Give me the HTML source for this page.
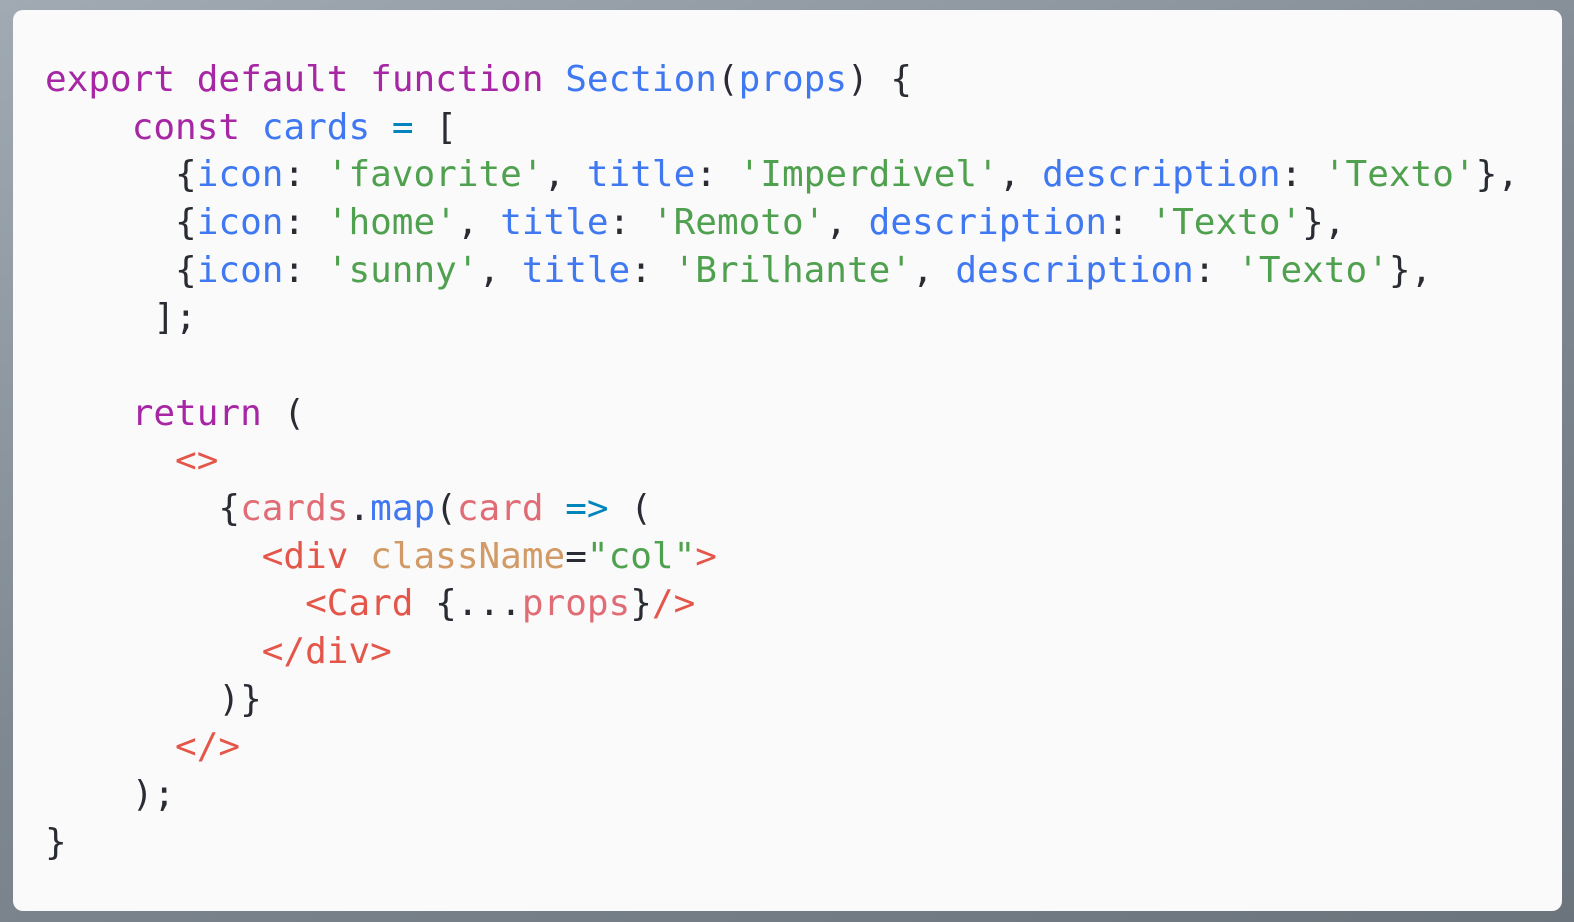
<!DOCTYPE html>
<html><head><meta charset="utf-8"><style>
html,body{margin:0;padding:0;}
body{width:1574px;height:922px;background:linear-gradient(160deg,#a1aab3 0%,#7f8891 50%,#6b747c 100%);position:relative;overflow:hidden;}
.card{position:absolute;left:13px;top:10px;width:1549px;height:901px;background:#fafafa;border-radius:10px;}
pre{position:absolute;left:45px;top:56px;margin:0;font-family:"DejaVu Sans Mono","Liberation Mono",monospace;font-size:36px;line-height:47.65px;color:#2a2c33;}
.k{color:#a626a4}.b{color:#4078f2}.g{color:#50a14f}.r{color:#e45649}.p{color:#e06c75}.o{color:#d19a66}.c{color:#0184bc}
</style></head><body><div class="card"></div>
<pre><span class="k">export</span> <span class="k">default</span> <span class="k">function</span> <span class="b">Section</span>(<span class="b">props</span>) {
    <span class="k">const</span> <span class="b">cards</span> <span class="c">=</span> [
      {<span class="b">icon</span>: <span class="g">'favorite'</span>, <span class="b">title</span>: <span class="g">'Imperdivel'</span>, <span class="b">description</span>: <span class="g">'Texto'</span>},
      {<span class="b">icon</span>: <span class="g">'home'</span>, <span class="b">title</span>: <span class="g">'Remoto'</span>, <span class="b">description</span>: <span class="g">'Texto'</span>},
      {<span class="b">icon</span>: <span class="g">'sunny'</span>, <span class="b">title</span>: <span class="g">'Brilhante'</span>, <span class="b">description</span>: <span class="g">'Texto'</span>},
     ];

    <span class="k">return</span> (
      <span class="r">&lt;&gt;</span>
        {<span class="p">cards</span>.<span class="b">map</span>(<span class="p">card</span> <span class="c">=&gt;</span> (
          <span class="r">&lt;div</span> <span class="o">className</span>=<span class="g">"col"</span><span class="r">&gt;</span>
            <span class="r">&lt;Card</span> {...<span class="p">props</span>}<span class="r">/&gt;</span>
          <span class="r">&lt;/div&gt;</span>
        )}
      <span class="r">&lt;/&gt;</span>
    );
}</pre>
</body></html>
